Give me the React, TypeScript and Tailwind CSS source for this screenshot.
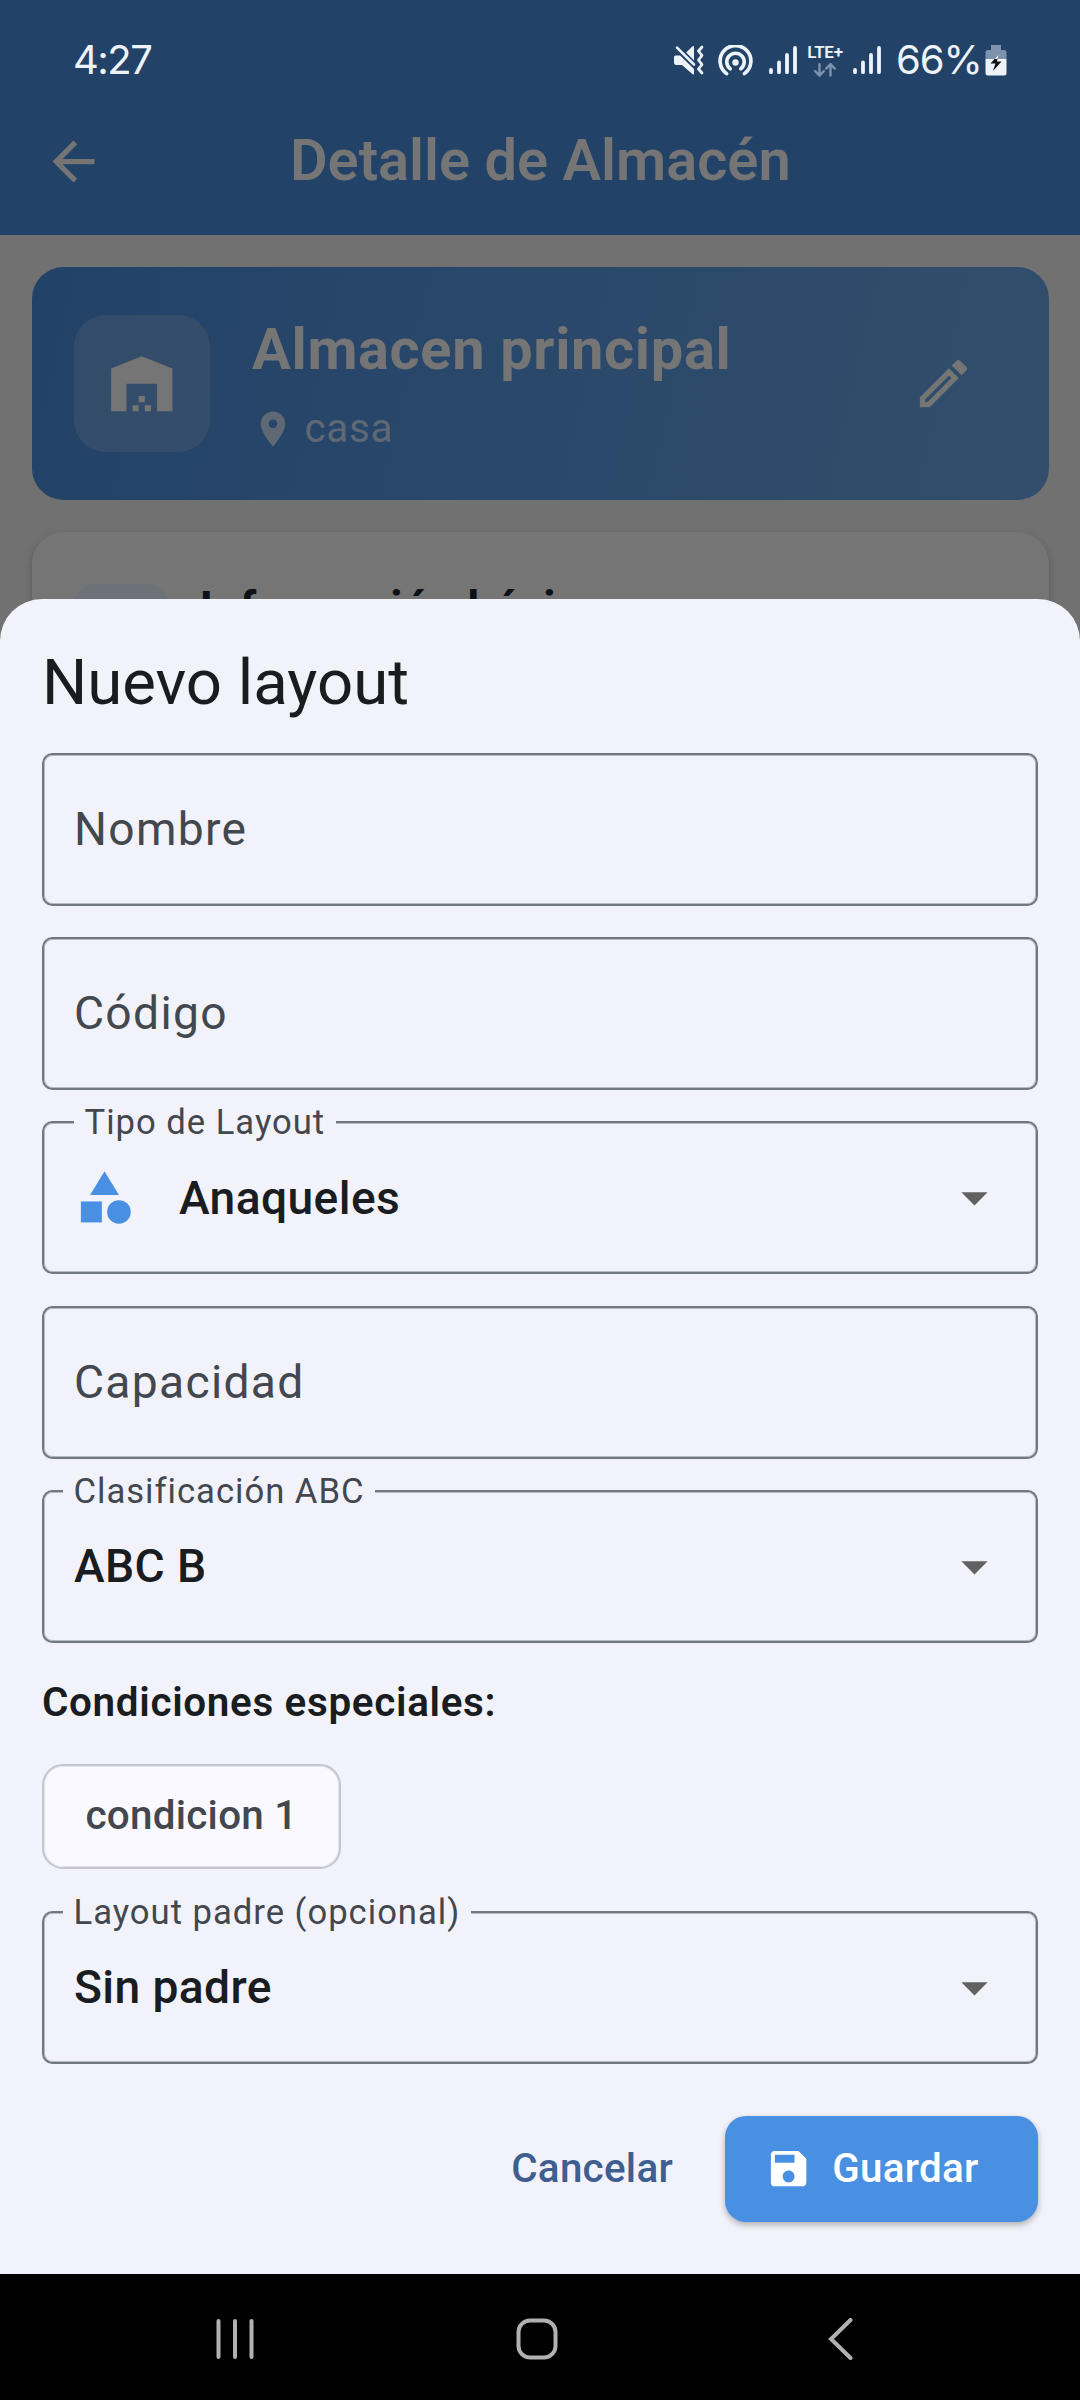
import type { ReactNode } from 'react';
import { MdArrowBack, MdArrowDropDown, MdCategory, MdLocationOn, MdOutlineEdit, MdSave } from 'react-icons/md';

function SignalBars() {
  return (
    <svg className="h-[30px] w-[28px]" viewBox="0 0 28 30" stroke="#eef3f9" strokeWidth="3.8" strokeLinecap="round">
      <path d="M2 25V27.2M10 17.5V27.2M18 10V27.2M26 3V27.2" />
    </svg>
  );
}

function StatusBar() {
  return (
    <div className="flex h-[88px] items-start pl-[73px] pt-[45px] font-['Inter'] text-[#eef3f9]">
      <span className="mt-[-9px] w-[601px] text-[40px] leading-[48px] tracking-[-1.5px]">4:27</span>
      <svg className="h-[30px] w-[30px]" viewBox="0 0 30 30" fill="#eef3f9">
        <path d="M1.5 10.5H6.2L20 24V28.5Q20 30 18.6 29.2L8 20H2.2Q0 20 0 18V12Q0 10.5 1.5 10.5Z" />
        <path d="M18.6 1.2Q20 .4 20 2V15.5L12.2 7.6Z" />
        <path d="M3 2.6L20 19.5" fill="none" stroke="#eef3f9" strokeWidth="2.6" strokeLinecap="round" />
        <path d="M28 2L24.5 6L28 10.5L24.5 15L28 19.5L24.5 24L28 28" fill="none" stroke="#eef3f9" strokeWidth="2.8" strokeLinecap="round" strokeLinejoin="round" />
      </svg>
      <svg className="ml-[14px] h-[32px] w-[35px]" viewBox="0 0 35 32" fill="none" stroke="#eef3f9" strokeWidth="3.6" strokeLinecap="round">
        <path d="M8.6 28.6A15.4 15.4 0 1 1 26.4 28.6" />
        <path d="M12.2 23.8A8.7 8.7 0 1 1 22.8 23.8" />
        <circle cx="17.5" cy="17.5" r="3.2" fill="#eef3f9" stroke="none" />
      </svg>
      <div className="ml-[16px]"><SignalBars /></div>
      <div className="ml-[9px] flex w-[38px] flex-col items-center">
        <span className="mt-[-2px] font-['Roboto'] text-[17px] leading-[18px] font-semibold tracking-[-0.3px]">LTE+</span>
        <svg className="mt-[2px] h-[14px] w-[22px]" viewBox="0 0 22 14" fill="none" stroke="#7d92ad" strokeWidth="2.4" strokeLinecap="round" strokeLinejoin="round">
          <path d="M5.5 1.2V12.4M1.2 8.2L5.5 12.6L9.8 8.2M16.5 12.6V1.4M12.2 5.6L16.5 1.2L20.8 5.6" />
        </svg>
      </div>
      <div className="ml-[9px]"><SignalBars /></div>
      <span className="mt-[-9px] ml-[15px] w-[86px] text-[40px] leading-[48px] tracking-[-1px]">66%</span>
      <svg className="ml-[3px] h-[31px] w-[22px]" viewBox="0 0 22 31">
        <path d="M6 0H16V5H19Q21.5 5 21.5 7.5V14H.5V7.5Q.5 5 3 5H6Z" fill="#7d92ad" />
        <path d="M.5 14H21.5V28Q21.5 30.5 19 30.5H3Q.5 30.5 .5 28Z" fill="#eef3f9" />
        <path d="M14 9L5.5 18.6H10.4L8 26L16.5 16.6H11.8Z" fill="#111" />
        <path d="M14 9L9.6 14H12.6Z" fill="#eef3f9" />
      </svg>
    </div>
  );
}

function AppBar() {
  return (
    <div className="flex h-[147px] items-center pl-[42px]">
      <MdArrowBack className="size-[63px] text-[#757575]" />
      <h1 className="ml-[185px] pb-[4px] text-[57.75px] leading-[68px] font-semibold text-[#757575]">Detalle de Almacén</h1>
    </div>
  );
}

function WarehouseIcon() {
  return (
    <svg className="size-[73.5px]" viewBox="0 0 24 24" fill="#757575">
      <path d="M12 3L22 7V21H17V12H7V21H2V7ZM11 16H13V18H11ZM9 19H11V21H9ZM13 19H15V21H13Z" />
    </svg>
  );
}

function WarehouseCard() {
  return (
    <div className="flex h-[233.5px] items-center rounded-[31.5px] bg-linear-[103deg,#224268,#324e6c] pr-[73.5px] pl-[42px]">
      <div className="flex size-[136.5px] items-center justify-center rounded-[31.5px] bg-[#757575]/20">
        <WarehouseIcon />
      </div>
      <div className="ml-[42px] flex-1 pt-[12px]">
        <h2 className="text-[57.75px] leading-[74px] font-bold tracking-[0.65px] text-[#757575]">Almacen principal</h2>
        <div className="mt-[6px] flex items-center">
          <MdLocationOn className="size-[42px] text-[#5f6975]" />
          <span className="ml-[10.5px] text-[40.4px] leading-[74px] tracking-[0.65px] text-[#5f6975]">casa</span>
        </div>
      </div>
      <MdOutlineEdit className="size-[63px] text-[#757575]" />
    </div>
  );
}

function InfoCard() {
  return (
    <div className="mt-[32px] flex h-[420px] items-start rounded-[31.5px] bg-[#757575] px-[42px] pt-[52px] shadow-[0_4px_8px_rgba(0,0,0,0.22)]">
      <div className="size-[94.5px] rounded-[21px] bg-[#6c7277]" />
      <h2 className="mt-[-7px] ml-[31.5px] text-[46.2px] leading-[62px] font-bold tracking-[0.39px] text-[#0c1218]">Información básica</h2>
    </div>
  );
}

type FieldProps = { label?: string; indent?: boolean; children: ReactNode; dropdown?: boolean };

function Field({ label, indent, children, dropdown }: FieldProps) {
  return (
    <div className="relative flex h-[153px] shrink-0 items-center rounded-[10.5px] border-2 border-[#737780] pr-[30px] pl-[30px] shadow-[inset_0_0_0_1px_rgba(115,119,128,0.45)]">
      {label && (
        <span
          className={
            'absolute top-[-22px] bg-[#f2f2fb] px-[10.5px] text-[34.65px] leading-[42px] tracking-[0.98px] whitespace-nowrap text-[#43474e] ' +
            (indent ? 'left-[30px]' : 'left-[19px]')
          }
        >
          {label}
        </span>
      )}
      {children}
      {dropdown && <MdArrowDropDown className="ml-auto size-[63px] text-[#616161]" />}
    </div>
  );
}

function Placeholder({ children }: { children: ReactNode }) {
  return <span className="text-[46.2px] leading-[63px] tracking-[1.31px] text-[#43474e]">{children}</span>;
}

function Value({ children }: { children: ReactNode }) {
  return <span className="text-[46.2px] leading-[63px] font-medium tracking-[0.39px] text-[#191c20]">{children}</span>;
}

function LayoutSheet() {
  return (
    <section className="absolute inset-x-0 top-[598.5px] bottom-[126px] flex flex-col rounded-t-[42px] bg-[#f2f2fb] px-[42px] pt-[42px]">
      <h2 className="text-[63.5px] leading-[84px] text-[#191c20]">Nuevo layout</h2>
      <div className="mt-[28.5px] flex flex-col gap-[31px]">
        <Field><Placeholder>Nombre</Placeholder></Field>
        <Field><Placeholder>Código</Placeholder></Field>
        <Field label="Tipo de Layout" indent dropdown>
          <MdCategory className="mr-[43px] ml-[-1px] size-[63px] text-[#4a90e2]" />
          <div className="flex pt-[2px]"><Value>Anaqueles</Value></div>
        </Field>
      </div>
      <div className="mt-[32px] flex flex-col gap-[31px]">
        <Field><Placeholder>Capacidad</Placeholder></Field>
        <Field label="Clasificación ABC" dropdown><Value>ABC B</Value></Field>
      </div>
      <h3 className="mt-[32px] text-[40.4px] leading-[55px] font-semibold tracking-[0.67px] text-[#191c20]">Condiciones especiales:</h3>
      <div className="mt-[34px] flex h-[105px] w-[299px] shrink-0 items-center justify-center rounded-[21px] border-2 border-[#c3c6cf] bg-[#f9f9ff] text-[40.4px] font-medium tracking-[0.26px] text-[#43474e] shadow-[inset_0_0_0_1px_rgba(195,198,207,0.4)]">
        condicion 1
      </div>
      <div className="mt-[42px]">
        <Field label="Layout padre (opcional)" dropdown><Value>Sin padre</Value></Field>
      </div>
      <div className="mt-[52px] flex h-[106px] items-center justify-end text-[40.4px] font-medium tracking-[0.26px]">
        <button className="mr-[52px] text-[#3f5f90]">Cancelar</button>
        <button className="flex h-[106px] w-[313px] items-center rounded-[21px] bg-[#4a90e2] pl-[39.5px] text-white shadow-[0_3px_6px_rgba(0,0,0,0.28)]">
          <MdSave className="size-[47.25px]" />
          <span className="ml-[20.5px]">Guardar</span>
        </button>
      </div>
    </section>
  );
}

function NavigationBar() {
  return (
    <nav className="absolute inset-x-0 bottom-0 flex h-[126px] items-center bg-black pt-[3px] pl-[216px]">
      <svg className="h-[42px] w-[38px]" viewBox="0 0 38 42" stroke="#b1b1b1" strokeWidth="4" strokeLinecap="round">
        <path d="M2.5 3V39M19 3V39M35.5 3V39" />
      </svg>
      <svg className="ml-[262px] size-[42px]" viewBox="0 0 42 42" fill="none" stroke="#b1b1b1" strokeWidth="4">
        <rect x="2.5" y="2.5" width="37" height="37" rx="11.5" />
      </svg>
      <svg className="ml-[270px] h-[42px] w-[25px]" viewBox="0 0 25 42" fill="none" stroke="#b1b1b1" strokeWidth="4" strokeLinecap="round">
        <path d="M22.5 2L3 21L22.5 40" />
      </svg>
    </nav>
  );
}

export default function App() {
  return (
    <div className="relative h-[2400px] w-[1080px] overflow-hidden bg-[#717171] font-['Roboto',sans-serif]">
      <header className="h-[235px] bg-[#224268]">
        <StatusBar />
        <AppBar />
      </header>
      <main className="px-[31.5px] pt-[31.5px]">
        <WarehouseCard />
        <InfoCard />
      </main>
      <LayoutSheet />
      <NavigationBar />
    </div>
  );
}
